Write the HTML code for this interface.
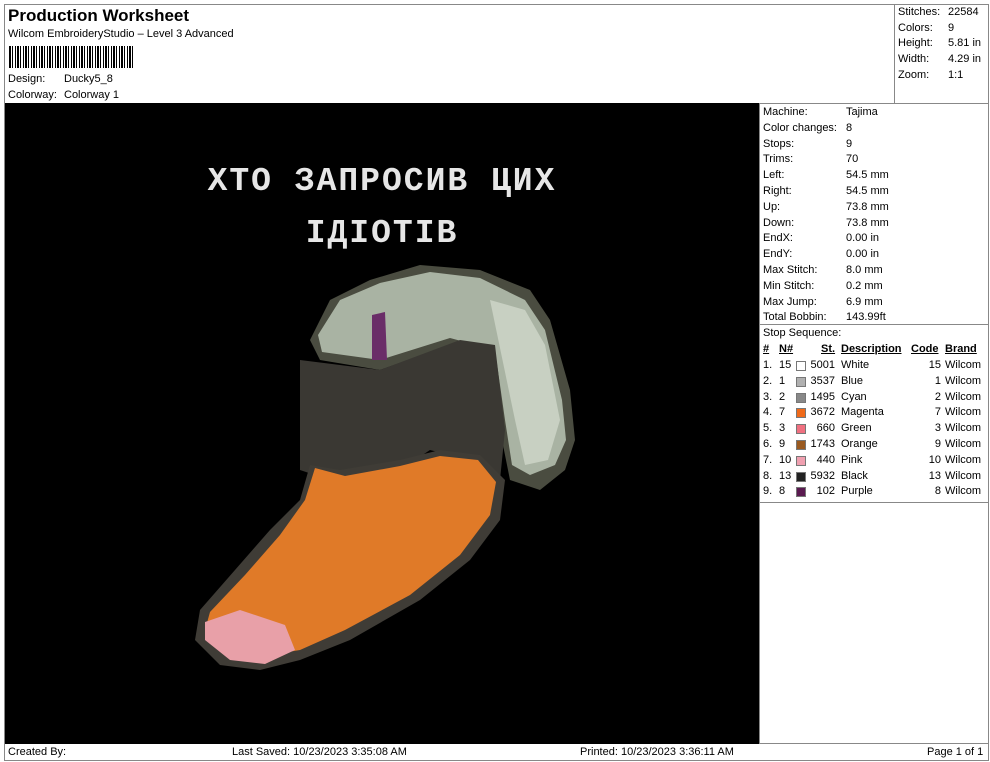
<!DOCTYPE html>
<html><head><meta charset="utf-8"><style>
*{margin:0;padding:0;box-sizing:border-box}
body{width:990px;height:762px;background:#fff;font-family:"Liberation Sans",sans-serif;color:#000;position:relative;overflow:hidden;font-size:11px}
.a{position:absolute;white-space:nowrap}
.b{position:absolute;border:1px solid #888}
</style></head><body>
<div class="b" style="left:4px;top:4px;width:985px;height:757px"></div>
<div class="a" style="left:8px;top:6px;font-size:17px;font-weight:bold">Production Worksheet</div>
<div class="a" style="left:8px;top:28px">Wilcom EmbroideryStudio – Level 3 Advanced</div>
<div class="a" style="left:9px;top:46px;width:124px;height:22px;background:repeating-linear-gradient(90deg,#000 0 2px,#fff 2px 3px,#000 3px 4px,#fff 4px 6px,#000 6px 7px,#fff 7px 8px)"></div>
<div class="a" style="left:8px;top:73px">Design:</div><div class="a" style="left:64px;top:73px">Ducky5_8</div>
<div class="a" style="left:8px;top:89px">Colorway:</div><div class="a" style="left:64px;top:89px">Colorway 1</div>
<div class="b" style="left:894px;top:4px;width:95px;height:100px"></div>
<div class="a" style="left:898px;top:5px;line-height:15.7px">Stitches:<br>Colors:<br>Height:<br>Width:<br>Zoom:</div>
<div class="a" style="left:948px;top:5px;line-height:15.7px">22584<br>9<br>5.81 in<br>4.29 in<br>1:1</div>
<div class="a" style="left:5px;top:103px;width:755px;height:641px;background:#000"></div>
<svg class="a" style="left:5px;top:103px" width="755" height="641" viewBox="5 103 755 641">
<text x="382" y="190" fill="#e6e6e6" font-family="Liberation Mono,monospace" font-weight="bold" font-size="33" text-anchor="middle" letter-spacing="2">ХТО ЗАПРОСИВ ЦИХ</text>
<text x="382" y="242" fill="#e6e6e6" font-family="Liberation Mono,monospace" font-weight="bold" font-size="33" text-anchor="middle" letter-spacing="2">ІДІОТІВ</text>
<path d="M310 340 L330 300 L370 280 L420 265 L480 270 L530 290 L550 320 L570 390 L575 440 L565 470 L540 490 L510 480 L500 430 L490 360 L450 345 L380 370 L320 360Z" fill="#4a4c40"/>
<path d="M318 335 L340 300 L380 283 L430 272 L480 278 L525 300 L545 330 L562 400 L566 440 L555 465 L530 475 L512 465 L505 420 L495 350 L450 338 L380 360 L322 352Z" fill="#a9b3a3"/>
<path d="M490 300 L525 310 L545 345 L560 420 L548 460 L525 465 L515 420 Z" fill="#c8d0c2"/>
<path d="M300 360 L380 370 L460 340 L495 345 L505 430 L500 480 L470 460 L430 450 L400 470 L330 480 L300 470Z" fill="#3a3833"/>
<path d="M372 315 L385 312 L387 360 L372 360Z" fill="#6a2d68"/>
<path d="M310 465 L340 470 L400 460 L440 450 L480 455 L505 480 L500 520 L470 560 L420 600 L350 640 L300 660 L260 670 L220 665 L195 640 L200 610 L235 570 L270 530 L300 500Z" fill="#3f3c36"/>
<path d="M315 468 L345 476 L400 466 L440 456 L478 460 L496 482 L490 515 L460 555 L410 595 L345 630 L300 650 L270 655 L230 650 L205 630 L210 612 L245 575 L280 535 L305 500Z" fill="#e07a28"/>
<path d="M205 622 L240 610 L285 625 L295 650 L265 664 L230 660 L205 640Z" fill="#e8a0a8"/>
</svg>
<div class="b" style="left:759px;top:103px;width:230px;height:641px"></div>
<div class="a" style="left:763px;top:105px;line-height:15.8px">Machine:<br>Color changes:<br>Stops:<br>Trims:<br>Left:<br>Right:<br>Up:<br>Down:<br>EndX:<br>EndY:<br>Max Stitch:<br>Min Stitch:<br>Max Jump:<br>Total Bobbin:<br>Stop Sequence:</div>
<div class="a" style="left:846px;top:105px;line-height:15.8px">Tajima<br>8<br>9<br>70<br>54.5 mm<br>54.5 mm<br>73.8 mm<br>73.8 mm<br>0.00 in<br>0.00 in<br>8.0 mm<br>0.2 mm<br>6.9 mm<br>143.99ft</div>
<div class="a" style="left:760px;top:324px;width:229px;border-top:1px solid #888"></div>
<div class="a" style="left:760px;top:502px;width:229px;border-top:1px solid #888"></div>
<div class="a" style="left:763px;top:343px;font-weight:bold;text-decoration:underline">#</div>
<div class="a" style="left:779px;top:343px;font-weight:bold;text-decoration:underline">N#</div>
<div class="a" style="left:821px;top:343px;font-weight:bold;text-decoration:underline">St.</div>
<div class="a" style="left:841px;top:343px;font-weight:bold;text-decoration:underline">Description</div>
<div class="a" style="left:911px;top:343px;font-weight:bold;text-decoration:underline">Code</div>
<div class="a" style="left:945px;top:343px;font-weight:bold;text-decoration:underline">Brand</div>
<div id="rows"></div>
<script>
var d=[["1.","15","#fff","5001","White","15"],["2.","1","#b0b0b0","3537","Blue","1"],["3.","2","#888","1495","Cyan","2"],["4.","7","#f06a1a","3672","Magenta","7"],["5.","3","#f07080","660","Green","3"],["6.","9","#9a5a20","1743","Orange","9"],["7.","10","#f0a0b0","440","Pink","10"],["8.","13","#222","5932","Black","13"],["9.","8","#5a1a50","102","Purple","8"]];
var h="";d.forEach(function(r,i){var y=359+i*15.8;
h+='<div class="a" style="left:763px;top:'+y+'px">'+r[0]+'</div><div class="a" style="left:779px;top:'+y+'px">'+r[1]+'</div>'+
'<div class="a" style="left:796px;top:'+(y+2)+'px;width:10px;height:10px;background:'+r[2]+';border:1px solid #777"></div>'+
'<div class="a" style="right:155px;top:'+y+'px">'+r[3]+'</div><div class="a" style="left:841px;top:'+y+'px">'+r[4]+'</div>'+
'<div class="a" style="right:49px;top:'+y+'px">'+r[5]+'</div><div class="a" style="left:945px;top:'+y+'px">Wilcom</div>';});
document.getElementById("rows").innerHTML=h;
</script>
<div class="a" style="left:8px;top:746px">Created By:</div>
<div class="a" style="left:232px;top:746px">Last Saved: 10/23/2023 3:35:08 AM</div>
<div class="a" style="left:580px;top:746px">Printed: 10/23/2023 3:36:11 AM</div>
<div class="a" style="left:927px;top:746px">Page 1 of 1</div>
</body></html>
